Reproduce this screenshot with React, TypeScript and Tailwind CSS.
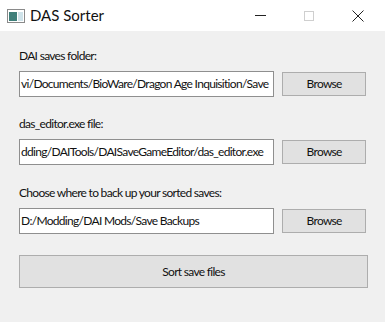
export default function App() {
  const font = { fontFamily: 'Lato, "Noto Sans", sans-serif' };
  const rows = [
    { label: 'DAI saves folder:', value: 'vi/Documents/BioWare/Dragon Age Inquisition/Save' },
    { label: 'das_editor.exe file:', value: 'dding/DAITools/DAISaveGameEditor/das_editor.exe' },
    { label: 'Choose where to back up your sorted saves:', value: 'D:/Modding/DAI Mods/Save Backups' },
  ];

  return (
    <div className="w-[385px] h-[322px] bg-[#f0f0f0] text-[#000] overflow-hidden" style={font}>
      {/* title bar */}
      <div className="h-[31px] bg-white flex items-center">
        <svg width="18" height="14" viewBox="0 0 18 14" className="ml-[7px]">
          <rect x="0.5" y="0.5" width="17" height="13" fill="#fff" stroke="#8a8a8a" />
          <rect x="2" y="3" width="8" height="9" fill="#3f7f7a" />
          <rect x="11" y="3" width="5" height="9" fill="#cfe3ea" />
        </svg>
        <span className="ml-[5px] text-[15px] text-[#111]">DAS Sorter</span>
        <div className="ml-auto flex items-center h-full">
          <div className="w-[46px] h-full flex items-center justify-center">
            <div className="w-[11px] h-px bg-[#222]" />
          </div>
          <div className="w-[46px] h-full flex items-center justify-center ml-[3px]">
            <div className="w-[10px] h-[10px] border border-[#cfcfcf]" />
          </div>
          <div className="w-[46px] h-full flex items-center justify-center ml-[3px] mr-[4px]">
            <svg width="12" height="12" viewBox="0 0 12 12">
              <path d="M0.5 0.5 L11.5 11.5 M11.5 0.5 L0.5 11.5" stroke="#222" strokeWidth="1" />
            </svg>
          </div>
        </div>
      </div>

      <div className="px-[19px] pt-[17px] text-[12px] tracking-[-0.7px]">
        {rows.map((r, i) => (
          <div key={i} className={i === 0 ? '' : i === 1 ? 'mt-[19px]' : 'mt-[20px]'}>
            <div className="leading-[16px] text-[#111]">{r.label}</div>
            <div className="mt-[7px] flex items-center">
              <div className="w-[256px] h-[26px] bg-white border border-[#8f8f8f] flex items-center pl-[1px] overflow-hidden whitespace-nowrap text-[#111]">
                <span className="shrink-0">{r.value}</span>
              </div>
              <button className="ml-[8px] w-[84px] h-[24px] bg-[#e1e1e1] border border-[#adadad] text-[#111]">
                Browse
              </button>
            </div>
          </div>
        ))}

        <button className="mt-[21px] w-[349px] h-[33px] bg-[#e1e1e1] border border-[#adadad] text-[#111]">
          Sort save files
        </button>
      </div>
    </div>
  );
}
